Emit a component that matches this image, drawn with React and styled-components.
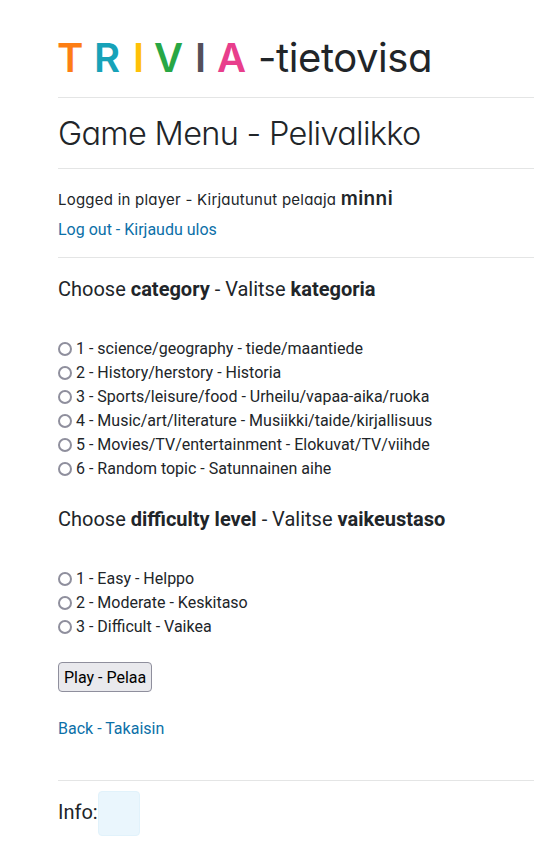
import React from "react";
import styled, { createGlobalStyle } from "styled-components";

const GlobalStyle = createGlobalStyle`
  *, *::before, *::after { box-sizing: border-box; }
  html { overflow: hidden; }
  body {
    margin: 0;
    background: #fff;
    color: #212529;
    font: 400 16px/24px Roboto, sans-serif;
  }
`;

const Page = styled.main`
  padding: 33px 0 0 58px;
  height: 854px;
  overflow: hidden;
`;

const Rule = styled.hr`
  margin: ${(p) => p.$space || "16px 0"};
  border: 0;
  height: 1px;
  background: #e4e5e5;
`;

const rounded = `
  font-family: Inter, sans-serif;
  font-feature-settings: "cv11" 1;
  white-space: nowrap;
`;

const Title = styled.h1`
  ${rounded}
  display: flex;
  margin: 0 0 0 -1px;
  height: 48px;
  font-size: 40px;
  line-height: 50px;
  font-weight: 380;
`;

const Letter = styled.span`
  flex: none;
  width: ${(p) => p.$width}px;
  color: ${(p) => p.$color};
  font-weight: 600;
`;

const TitleTail = styled.span`
  letter-spacing: -0.4px;
`;

const Heading = styled.h2`
  ${rounded}
  margin: 0;
  height: 38px;
  font-size: 32.5px;
  line-height: 39px;
  font-weight: 360;
  letter-spacing: -0.7px;
`;

const Player = styled.p`
  ${rounded}
  margin: 0;
  height: 35px;
  font-size: 15px;
  line-height: 32px;
  letter-spacing: 0.23px;
`;

const PlayerName = styled.strong`
  font-size: 19px;
  font-weight: 600;
  letter-spacing: 0.4px;
`;

const Link = styled.a`
  display: block;
  width: fit-content;
  color: #0c70a8;
  text-decoration: none;
`;

const Question = styled.h3`
  margin: ${(p) => p.$space};
  font-size: 20px;
  line-height: 24px;
  font-weight: 400;

  strong { font-weight: 700; }
`;

const Option = styled.label`
  display: flex;
  align-items: center;
  gap: 4px;
  height: 24px;
`;

const Radio = styled.input`
  appearance: none;
  flex: none;
  margin: 0;
  width: 14px;
  height: 14px;
  border: 2px solid #8f8f9d;
  border-radius: 50%;
  background: #fff;

  &:checked { box-shadow: inset 0 0 0 2px #fff; background: #0c70a8; }
`;

const PlayButton = styled.button`
  display: block;
  margin: 23px 0 25px;
  padding: 1px 5px 0;
  width: 94px;
  height: 30px;
  border: 1px solid #8f8f9d;
  border-radius: 4px;
  background: #e9e9ed;
  color: #000;
  font: inherit;
  line-height: 28px;
  white-space: nowrap;
`;

const Info = styled.footer`
  display: flex;
  align-items: flex-start;
  font-size: 20px;
  line-height: 43px;
`;

const InfoBox = styled.output`
  width: 42px;
  height: 45px;
  border: 1px solid #e1f2fb;
  border-radius: 4px;
  background: #eaf6fd;
`;

const letters = [
  ["T", "#fd7e14", 37],
  ["R", "#17a2b8", 39],
  ["I", "#ffc107", 21],
  ["V", "#28a745", 41],
  ["I", "#544f5a", 22],
  ["A", "#e83e8c", 41],
];

const categories = [
  "1 - science/geography - tiede/maantiede",
  "2 - History/herstory - Historia",
  "3 - Sports/leisure/food - Urheilu/vapaa-aika/ruoka",
  "4 - Music/art/literature - Musiikki/taide/kirjallisuus",
  "5 - Movies/TV/entertainment - Elokuvat/TV/viihde",
  "6 - Random topic - Satunnainen aihe",
];

const levels = ["1 - Easy - Helppo", "2 - Moderate - Keskitaso", "3 - Difficult - Vaikea"];

function Options({ name, items }) {
  return items.map((item) => (
    <Option key={item}>
      <Radio type="radio" name={name} value={item[0]} />
      <span>{item}</span>
    </Option>
  ));
}

export default function App() {
  return (
    <>
      <GlobalStyle />
      <Page>
        <Title>
          {letters.map(([char, color, width], i) => (
            <Letter key={i} $color={color} $width={width}>{char}</Letter>
          ))}
          <TitleTail>-tietovisa</TitleTail>
        </Title>
        <Rule />
        <Heading>Game Menu - Pelivalikko</Heading>
        <Rule $space="16px 0 14px" />
        <Player>
          Logged in player - Kirjautunut pelaaja <PlayerName>minni</PlayerName>
        </Player>
        <Link href="#logout">Log out - Kirjaudu ulos</Link>
        <Rule $space="15px 0 16px" />
        <Question $space="19px 0 36px">
          Choose <strong>category</strong> - Valitse <strong>kategoria</strong>
        </Question>
        <Options name="category" items={categories} />
        <Question $space="26px 0 36px">
          Choose <strong>difficulty level</strong> - Valitse <strong>vaikeustaso</strong>
        </Question>
        <Options name="level" items={levels} />
        <PlayButton type="button">Play - Pelaa</PlayButton>
        <Link href="#back">Back - Takaisin</Link>
        <Rule $space="39px 0 10px" />
        <Info>
          <span>Info:</span>
          <InfoBox />
        </Info>
      </Page>
    </>
  );
}
